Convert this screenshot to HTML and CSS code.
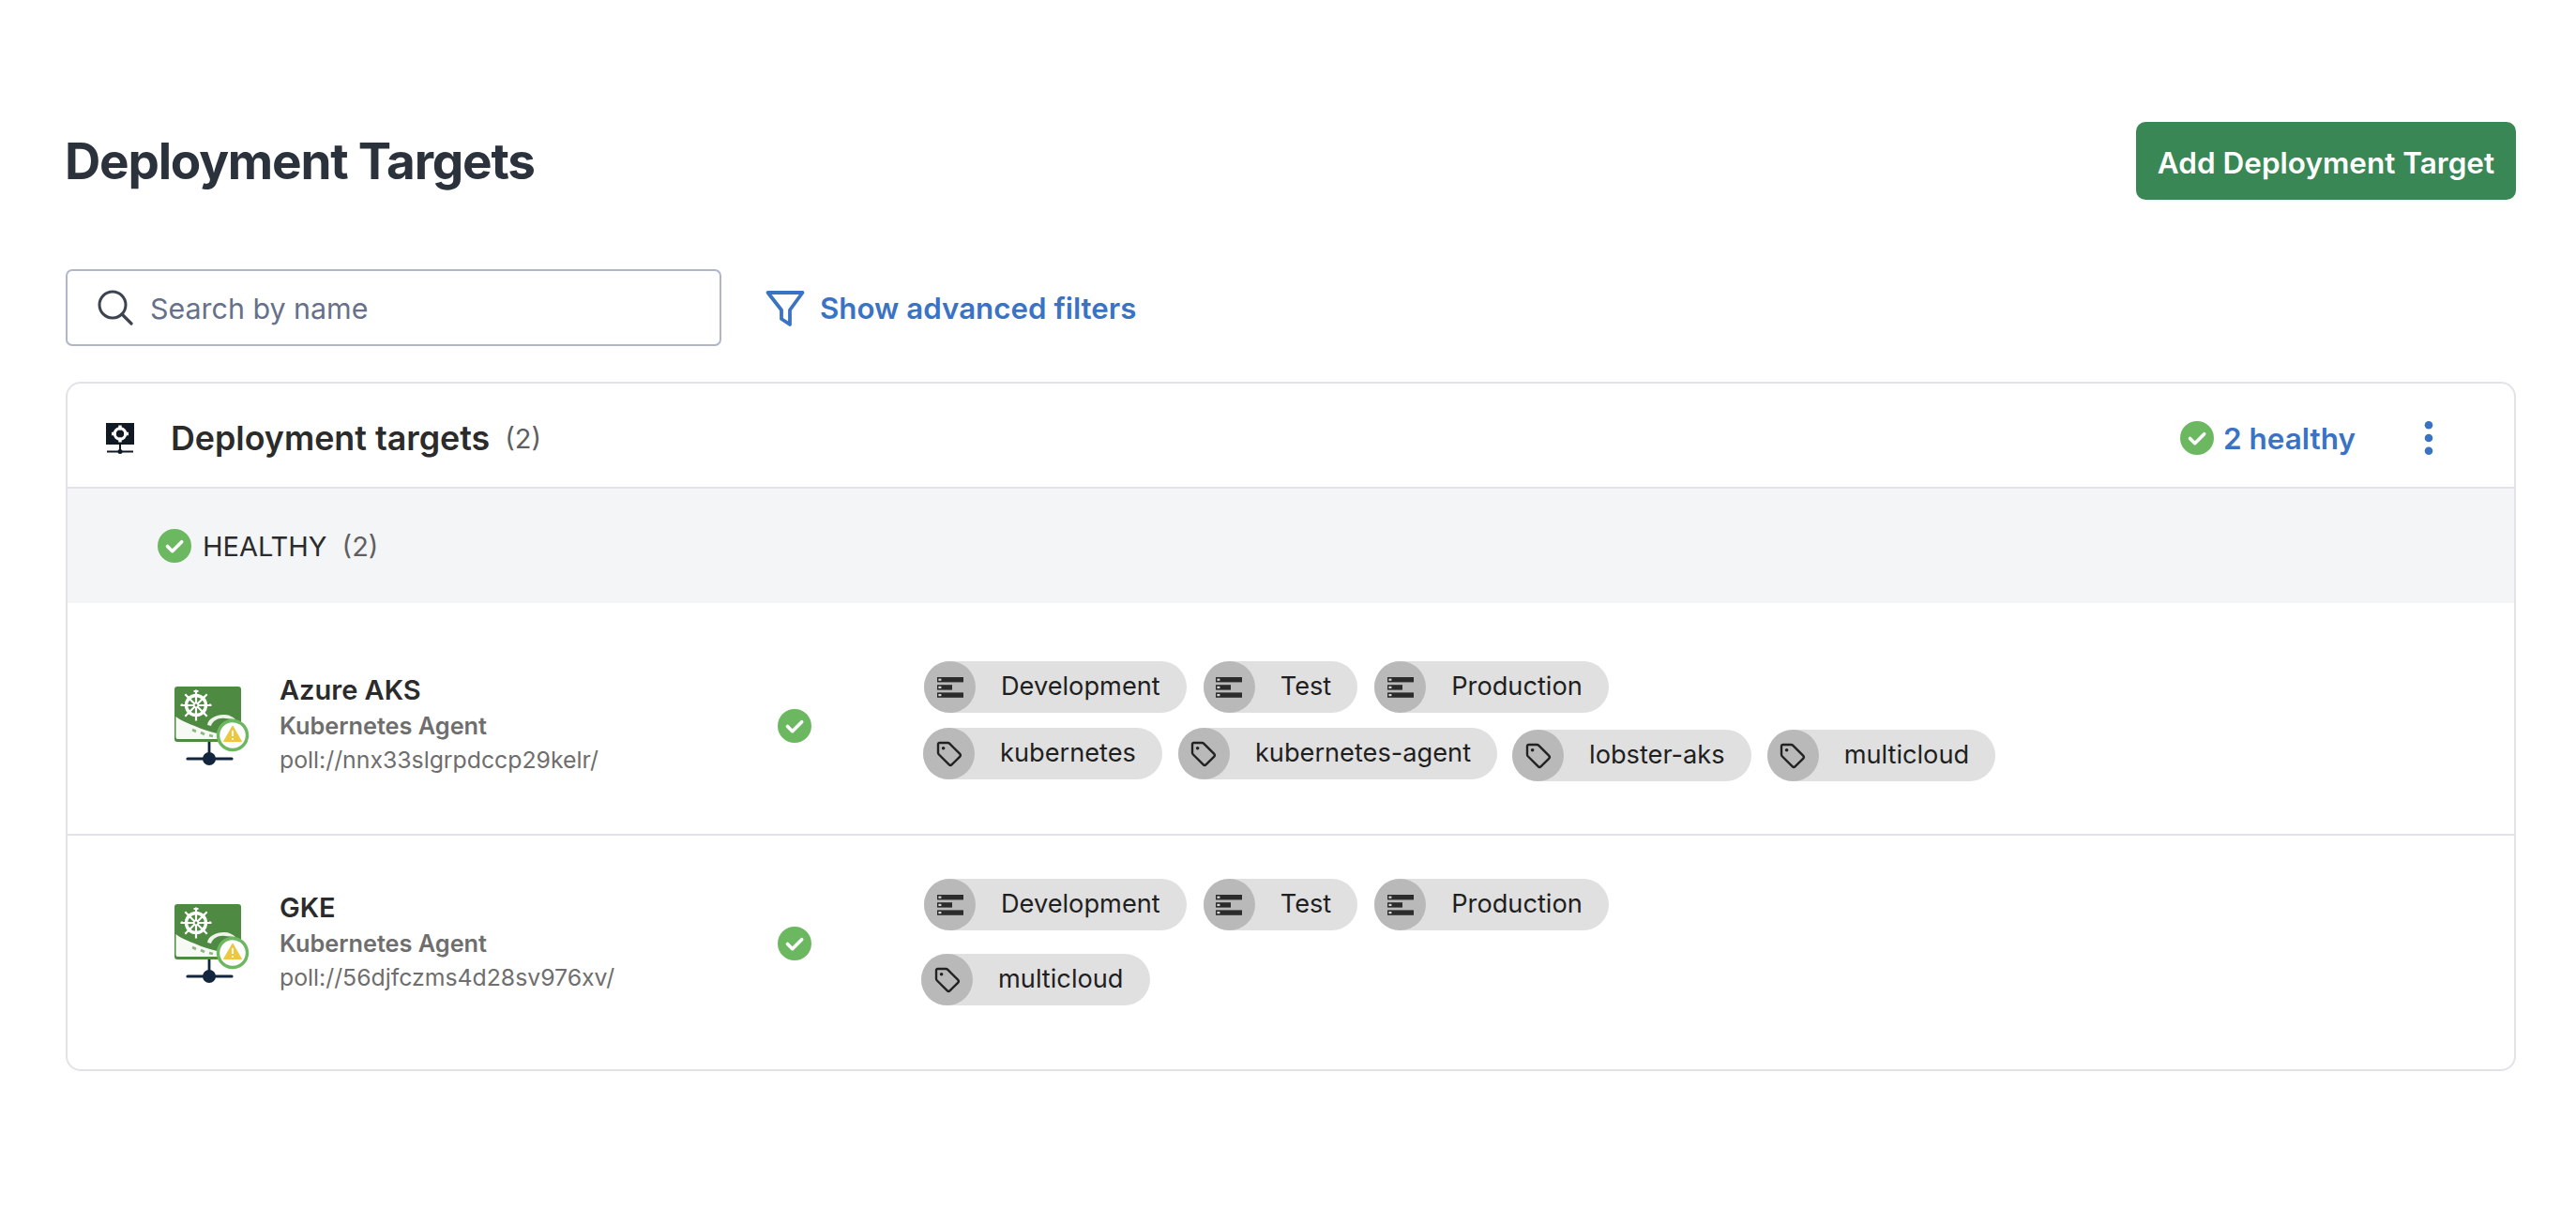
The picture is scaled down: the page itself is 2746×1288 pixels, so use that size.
FILE: index.html
```html
<!DOCTYPE html>
<html lang="en">
<head>
  <meta charset="UTF-8" />
  <title>Deployment Targets</title>
  <link rel="stylesheet" href="styles.css">
</head>
<body>

  <svg class="defs" width="0" height="0" aria-hidden="true">
    <filter id="soft"><feGaussianBlur stdDeviation="0.6"/></filter>
    <symbol id="check" viewBox="0 0 36 36">
      <circle cx="18" cy="18" r="18" fill="#6bb860"/>
      <path d="M10.5 18.500l5.200 5.200 10-10" fill="none" stroke="#fff" stroke-width="3.600" stroke-linecap="round" stroke-linejoin="round"/>
    </symbol>
    <symbol id="env" viewBox="0 0 28 22">
      <rect x="0" y="0" width="28" height="5.400" fill="#2b2b2b"/>
      <rect x="0" y="8.200" width="16" height="5.400" fill="#2b2b2b"/>
      <rect x="0" y="16.400" width="28" height="5.400" fill="#2b2b2b"/>
      <rect x="1.400" y="1.600" width="3" height="2.200" fill="#d6d6d6"/>
      <rect x="1.400" y="9.800" width="3" height="2.200" fill="#d6d6d6"/>
      <rect x="1.400" y="18" width="3" height="2.200" fill="#d6d6d6"/>
    </symbol>
    <symbol id="tag" viewBox="0 0 28 28">
      <path d="M2 3.600A1.600 1.600 0 0 1 3.600 2h8.600a3 3 0 0 1 2.100.9l10.800 10.800a2.200 2.200 0 0 1 0 3.100l-8.400 8.400a2.200 2.200 0 0 1-3.100 0L2.900 14.500a3 3 0 0 1-.9-2.100z" fill="none" stroke="#222" stroke-width="2.400" stroke-linejoin="round"/>
      <circle cx="7.600" cy="7.800" r="1.800" fill="#222"/>
    </symbol>
    <symbol id="agent" viewBox="0 0 80 88">
      <rect x="0" y="0" width="71" height="59" rx="3" fill="#4e8a41"/>
      <g filter="url(#soft)">
        <path d="M1.500 32c6 5 13 7 20 10 9 4 16 6 24 8l3 6H3.500a2 2 0 0 1-2-2z" fill="#f6f9f4"/>
        <path d="M35 41c1-7 9-11 18-11 5 0 9 2 12 5l-11-1c-7-1-13 2-15 8z" fill="#eef4ea"/>
        <path d="M19 46l4 2M28 49l4 2M37 52l4 1" stroke="#8fb584" stroke-width="2.600"/>
      </g>
      <g fill="none" stroke="#fff">
        <circle cx="23" cy="20" r="10.500" stroke-width="3.400"/>
        <path d="M23 3.500v33M6.500 20h33M11.300 8.300l23.400 23.400M34.700 8.300l-23.400 23.400" stroke-width="2.200"/>
        <path d="M20.500 5h5M8 20.500v-2M38 20.500v-2" stroke-width="2"/>
      </g>
      <circle cx="23" cy="20" r="3.200" fill="#fff"/>
      <circle cx="23" cy="20" r="1.400" fill="#4e8a41"/>
      <path d="M37 59v18" stroke="#13263d" stroke-width="2.800"/>
      <path d="M14 77h47" stroke="#13263d" stroke-width="3.200" stroke-linecap="round"/>
      <circle cx="37" cy="77" r="7" fill="#13263d"/>
      <circle cx="62" cy="52" r="15.500" fill="#fff" stroke="#6bb860" stroke-width="3.400"/>
      <path d="M62 42l9.500 16.500h-19z" fill="#efc641" stroke="#efc641" stroke-linejoin="round"/>
      <path d="M62 47v6M62 55v1.800" stroke="#fff" stroke-width="1.800"/>
    </symbol>
  </svg>

  <main class="page">

    <header class="top">
      <h1>Deployment Targets</h1>
      <button class="add-btn">Add Deployment Target</button>
    </header>

    <div class="filters">
      <div class="search">
        <svg class="search-icon" viewBox="0 0 38 38"><circle cx="16" cy="16" r="14" fill="none" stroke="#3d4450" stroke-width="3"/><path d="M26 26l10 10" stroke="#3d4450" stroke-width="3.200" stroke-linecap="round"/></svg>
        <span>Search by name</span>
      </div>
      <a class="adv-link">
        <svg class="funnel" viewBox="0 0 44 40"><path d="M3.500 3h37L27 21.500V37l-9-6V21.500z" fill="none" stroke="#3b73c4" stroke-width="3.800" stroke-linejoin="round"/></svg>
        Show advanced filters
      </a>
    </div>

    <section class="card">
      <div class="card-head">
        <svg class="target-icon" viewBox="0 0 30 33">
          <rect x="0" y="0" width="30" height="23" fill="#111a24"/>
          <circle cx="15" cy="11.500" r="5.800" fill="none" stroke="#fff" stroke-width="3"/>
          <path d="M15 2.500v5M15 15.500v5M6 11.500h5M19 11.500h5" stroke="#fff" stroke-width="3.400"/>
          <path d="M15 23v8" stroke="#111a24" stroke-width="2"/>
          <path d="M1 30.500h28" stroke="#111a24" stroke-width="2"/>
          <circle cx="15" cy="30.500" r="2.500" fill="#111a24"/>
        </svg>
        <h2>Deployment targets</h2>
        <span class="count">(2)</span>
        <div class="summary">
          <svg class="check-icon"><use href="#check"/></svg>
          <a class="summary-link">2 healthy</a>
        </div>
        <svg class="kebab" viewBox="0 0 10 36"><circle cx="5" cy="4.300" r="4.300" fill="#3b73c4"/><circle cx="5" cy="18" r="4.300" fill="#3b73c4"/><circle cx="5" cy="31.700" r="4.300" fill="#3b73c4"/></svg>
      </div>

      <div class="group-head">
        <svg class="check-icon"><use href="#check"/></svg>
        <span class="group-name">HEALTHY</span>
        <span class="count">(2)</span>
      </div>

      <div class="target first">
        <svg class="agent-icon"><use href="#agent"/></svg>
        <div class="info">
          <div class="name">Azure AKS</div>
          <div class="kind">Kubernetes Agent</div>
          <div class="uri">poll://nnx33slgrpdccp29kelr/</div>
        </div>
        <div class="status"><svg class="check-icon"><use href="#check"/></svg></div>
        <div class="chips">
          <div class="chip-row">
            <span class="chip"><span class="chip-icon"><svg class="env-svg"><use href="#env"/></svg></span><span class="chip-text">Development</span></span>
            <span class="chip"><span class="chip-icon"><svg class="env-svg"><use href="#env"/></svg></span><span class="chip-text">Test</span></span>
            <span class="chip"><span class="chip-icon"><svg class="env-svg"><use href="#env"/></svg></span><span class="chip-text">Production</span></span>
          </div>
          <div class="chip-row tags">
            <span class="chip"><span class="chip-icon"><svg class="tag-svg"><use href="#tag"/></svg></span><span class="chip-text">kubernetes</span></span>
            <span class="chip"><span class="chip-icon"><svg class="tag-svg"><use href="#tag"/></svg></span><span class="chip-text">kubernetes-agent</span></span>
            <span class="chip low"><span class="chip-icon"><svg class="tag-svg"><use href="#tag"/></svg></span><span class="chip-text">lobster-aks</span></span>
            <span class="chip low"><span class="chip-icon"><svg class="tag-svg"><use href="#tag"/></svg></span><span class="chip-text">multicloud</span></span>
          </div>
        </div>
      </div>

      <div class="target">
        <svg class="agent-icon"><use href="#agent"/></svg>
        <div class="info">
          <div class="name">GKE</div>
          <div class="kind">Kubernetes Agent</div>
          <div class="uri">poll://56djfczms4d28sv976xv/</div>
        </div>
        <div class="status"><svg class="check-icon"><use href="#check"/></svg></div>
        <div class="chips">
          <div class="chip-row">
            <span class="chip"><span class="chip-icon"><svg class="env-svg"><use href="#env"/></svg></span><span class="chip-text">Development</span></span>
            <span class="chip"><span class="chip-icon"><svg class="env-svg"><use href="#env"/></svg></span><span class="chip-text">Test</span></span>
            <span class="chip"><span class="chip-icon"><svg class="env-svg"><use href="#env"/></svg></span><span class="chip-text">Production</span></span>
          </div>
          <div class="chip-row tags-far">
            <span class="chip"><span class="chip-icon"><svg class="tag-svg"><use href="#tag"/></svg></span><span class="chip-text">multicloud</span></span>
          </div>
        </div>
      </div>
    </section>

  </main>

</body>
</html>
```

FILE: styles.css
```css
body {
  margin: 0;
  background: #fff;
  font-family: Inter, "Liberation Sans", sans-serif;
  color: #2b2b2b;
}

.defs {
  position: absolute;
}

.page {
  padding: 130px 64px 0 70px;
}

.top {
  display: flex;
  justify-content: space-between;
  align-items: center;
}

h1 {
  margin: 0 0 0 -1px;
  font-size: 53px;
  font-weight: 700;
  letter-spacing: -1.200px;
  color: #2b323c;
}

.add-btn {
  width: 405px;
  height: 83px;
  padding: 3px 0 0;
  background-color: #3a8756;
  color: white;
  border: none;
  border-radius: 10px;
  font-family: inherit;
  font-size: 31.500px;
  font-weight: 600;
}

.filters {
  display: flex;
  align-items: center;
  margin-top: 74px;
}

.search {
  display: flex;
  align-items: center;
  box-sizing: border-box;
  width: 699px;
  height: 82px;
  padding-left: 32px;
  border: 2px solid #b0b5ca;
  border-radius: 7px;
  font-size: 30.400px;
  color: #66708a;
}

.search span {
  padding-top: 2px;
}

.search-icon {
  width: 38px;
  height: 38px;
  margin-right: 18px;
}

.adv-link {
  display: flex;
  align-items: center;
  margin-left: 46px;
  padding-top: 1px;
  font-size: 31.300px;
  font-weight: 600;
  color: #3b73c4;
}

.funnel {
  width: 44px;
  height: 40px;
  margin-right: 15px;
}

.card {
  margin-top: 38px;
  border: 2px solid #e2e2ea;
  border-radius: 16px;
  overflow: hidden;
}

.card-head {
  display: flex;
  align-items: center;
  box-sizing: border-box;
  height: 112px;
  padding: 6px 86px 0 41px;
  border-bottom: 2px solid #e2e2ea;
}

.target-icon {
  width: 30px;
  height: 33px;
  margin-right: 39px;
}

h2 {
  margin: 0;
  font-size: 35.800px;
  font-weight: 600;
}

.count {
  margin-left: 16px;
  font-size: 29px;
  color: #5f5f5f;
}

.summary {
  display: flex;
  align-items: center;
  margin-left: auto;
  margin-right: 73px;
}

.check-icon {
  display: block;
  width: 36px;
  height: 36px;
}

.summary-link {
  margin-left: 10px;
  font-size: 31.500px;
  font-weight: 600;
  color: #3b73c4;
}

.kebab {
  width: 10px;
  height: 36px;
}

.group-head {
  display: flex;
  align-items: center;
  height: 122px;
  padding-left: 96px;
  background-color: #f4f5f7;
}

.group-name {
  margin-left: 12px;
  font-size: 29px;
}

.target {
  display: flex;
  align-items: flex-start;
  box-sizing: border-box;
  height: 251px;
  padding: 46px 0 0 114px;
}

.target.first {
  height: 246px;
  padding-top: 62px;
}

.target + .target {
  border-top: 2px solid #e2e2ea;
}

.agent-icon {
  flex: none;
  width: 80px;
  height: 88px;
  margin: 27px 32px 0 0;
}

.info {
  flex: none;
  width: 531px;
  margin-top: 12px;
}

.name {
  font-size: 29px;
  font-weight: 600;
  line-height: 38px;
}

.kind {
  font-size: 25.300px;
  font-weight: 600;
  line-height: 37px;
  color: #6e6e6e;
}

.uri {
  font-size: 24.800px;
  line-height: 37px;
  color: #6e6e6e;
}

.status {
  flex: none;
  width: 156px;
  margin-top: 51px;
}

.chip-row {
  display: flex;
  gap: 18px;
}

.chip-row + .chip-row {
  margin-top: 16px;
  margin-left: -1px;
}

.chip-row.tags {
  gap: 17px;
}

.chip-row.tags-far {
  margin-top: 25px;
  margin-left: -3px;
}

.chip {
  display: inline-flex;
  align-items: center;
  height: 55px;
  padding-right: 28px;
  background-color: #e0e0e0;
  border-radius: 28px;
  font-size: 27.200px;
  color: #1f1f1f;
}

.chip.low {
  position: relative;
  top: 2px;
  left: -1px;
}

.chip-text {
  padding-bottom: 2px;
}

.chip-icon {
  display: flex;
  align-items: center;
  justify-content: center;
  width: 55px;
  height: 55px;
  margin-right: 27px;
  background-color: #b9b9b9;
  border-radius: 50%;
}

.env-svg {
  width: 28px;
  height: 22px;
}

.tag-svg {
  width: 28px;
  height: 28px;
}
```
